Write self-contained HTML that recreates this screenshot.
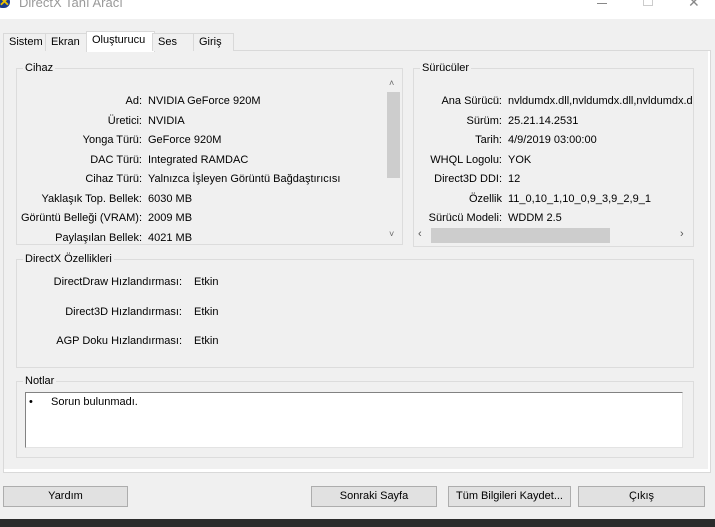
<html><head><style>
body{margin:0;width:715px;height:527px;background:#f0f0f0;font-family:"Liberation Sans",sans-serif;font-size:11px;color:#000;position:relative;overflow:hidden}
.a{position:absolute}
.grp{position:absolute;border:1px solid #dcdcdc}
.gl{position:absolute;background:#f0f0f0;padding:0 2px;top:-7px;left:6px}
.r{position:absolute;text-align:right;white-space:nowrap}
.v{position:absolute;white-space:nowrap}
.btn{position:absolute;top:486px;height:19px;background:#e1e1e1;border:1px solid #adadad;text-align:center;line-height:19px}
.tab{position:absolute;top:33px;height:17px;border:1px solid #d9d9d9;border-bottom:none;background:#f0f0f0;line-height:17px;padding-left:5px}
</style></head><body>
<div class="a" style="left:0;top:0;width:715px;height:19px;background:#fff"></div>
<div class="a" style="left:-4px;top:-4px;width:14px;height:12px;background:#1a3c8c;border-radius:6px"></div>
<div class="a" style="left:-1px;top:-6px;color:#e8c000;font-weight:bold;font-size:13px">✕</div>
<div class="a" style="left:19px;top:-5px;font-size:13px;color:#999">DirectX Tanı Aracı</div>
<div class="a" style="left:597px;top:3px;width:10px;height:1px;background:#888"></div>
<div class="a" style="left:643px;top:-4px;width:8px;height:8px;border:1px solid #ccc"></div>
<div class="a" style="left:688px;top:-6px;color:#888;font-size:14px">✕</div>
<div class="a" style="left:3px;top:50px;width:706px;height:421px;background:#fff;border:1px solid #d9d9d9"></div>
<div class="a" style="left:4px;top:51px;width:704px;height:418px;background:#f0f0f0"></div>
<div class="tab" style="left:3px;width:40px">Sistem</div>
<div class="tab" style="left:45px;width:39px">Ekran</div>
<div class="tab" style="left:86px;top:31px;height:20px;width:62px;background:#fff;border-color:#d9d9d9">Oluşturucu</div>
<div class="tab" style="left:152px;width:35px">Ses</div>
<div class="tab" style="left:193px;width:34px">Giriş</div>
<div class="grp" style="left:16px;top:68px;width:385px;height:175px"><span class="gl">Cihaz</span></div>
<div class="a" style="left:386px;top:75px;width:15px;height:168px;background:#f0f0f0"></div>
<div class="a" style="left:387px;top:92px;width:13px;height:86px;background:#cdcdcd"></div>
<div class="a" style="left:389px;top:78px;font-size:9px;color:#666">˄</div>
<div class="a" style="left:389px;top:229px;font-size:9px;color:#666">˅</div>
<div class="r" style="left:0;width:142px;top:92px;line-height:19.5px">Ad:<br>Üretici:<br>Yonga Türü:<br>DAC Türü:<br>Cihaz Türü:<br>Yaklaşık Top. Bellek:<br>Görüntü Belleği (VRAM):<br>Paylaşılan Bellek:</div>
<div class="v" style="left:148px;top:92px;line-height:19.5px">NVIDIA GeForce 920M<br>NVIDIA<br>GeForce 920M<br>Integrated RAMDAC<br>Yalnızca İşleyen Görüntü Bağdaştırıcısı<br>6030 MB<br>2009 MB<br>4021 MB</div>
<div class="grp" style="left:413px;top:68px;width:279px;height:177px"><span class="gl">Sürücüler</span></div>
<div class="r" style="left:400px;width:102px;top:92px;line-height:19.5px">Ana Sürücü:<br>Sürüm:<br>Tarih:<br>WHQL Logolu:<br>Direct3D DDI:<br>Özellik<br>Sürücü Modeli:</div>
<div class="v" style="left:508px;top:92px;line-height:19.5px;width:184px;overflow:hidden">nvldumdx.dll,nvldumdx.dll,nvldumdx.dll<br>25.21.14.2531<br>4/9/2019 03:00:00<br>YOK<br>12<br>11_0,10_1,10_0,9_3,9_2,9_1<br>WDDM 2.5</div>
<div class="a" style="left:414px;top:228px;width:278px;height:16px;background:#f0f0f0"></div>
<div class="a" style="left:431px;top:228px;width:179px;height:15px;background:#cdcdcd"></div>
<div class="a" style="left:418px;top:228px;color:#555">‹</div>
<div class="a" style="left:680px;top:228px;color:#555">›</div>
<div class="grp" style="left:16px;top:259px;width:676px;height:107px"><span class="gl">DirectX Özellikleri</span></div>
<div class="r" style="left:0;width:182px;top:268px;line-height:29.5px">DirectDraw Hızlandırması:<br>Direct3D Hızlandırması:<br>AGP Doku Hızlandırması:</div>
<div class="v" style="left:194px;top:268px;line-height:29.5px">Etkin<br>Etkin<br>Etkin</div>
<div class="grp" style="left:16px;top:381px;width:676px;height:75px"><span class="gl">Notlar</span></div>
<div class="a" style="left:25px;top:392px;width:656px;height:54px;background:#fff;border:1px solid #828282;border-right-color:#e3e3e3;border-bottom-color:#e3e3e3"></div>
<div class="v" style="left:29px;top:396px">•</div>
<div class="v" style="left:51px;top:396px">Sorun bulunmadı.</div>
<div class="btn" style="left:3px;width:123px">Yardım</div>
<div class="btn" style="left:311px;width:124px">Sonraki Sayfa</div>
<div class="btn" style="left:448px;width:121px">Tüm Bilgileri Kaydet...</div>
<div class="btn" style="left:578px;width:125px">Çıkış</div>
<div class="a" style="left:0;top:519px;width:715px;height:8px;background:#2b2b2b"></div>
</body></html>
